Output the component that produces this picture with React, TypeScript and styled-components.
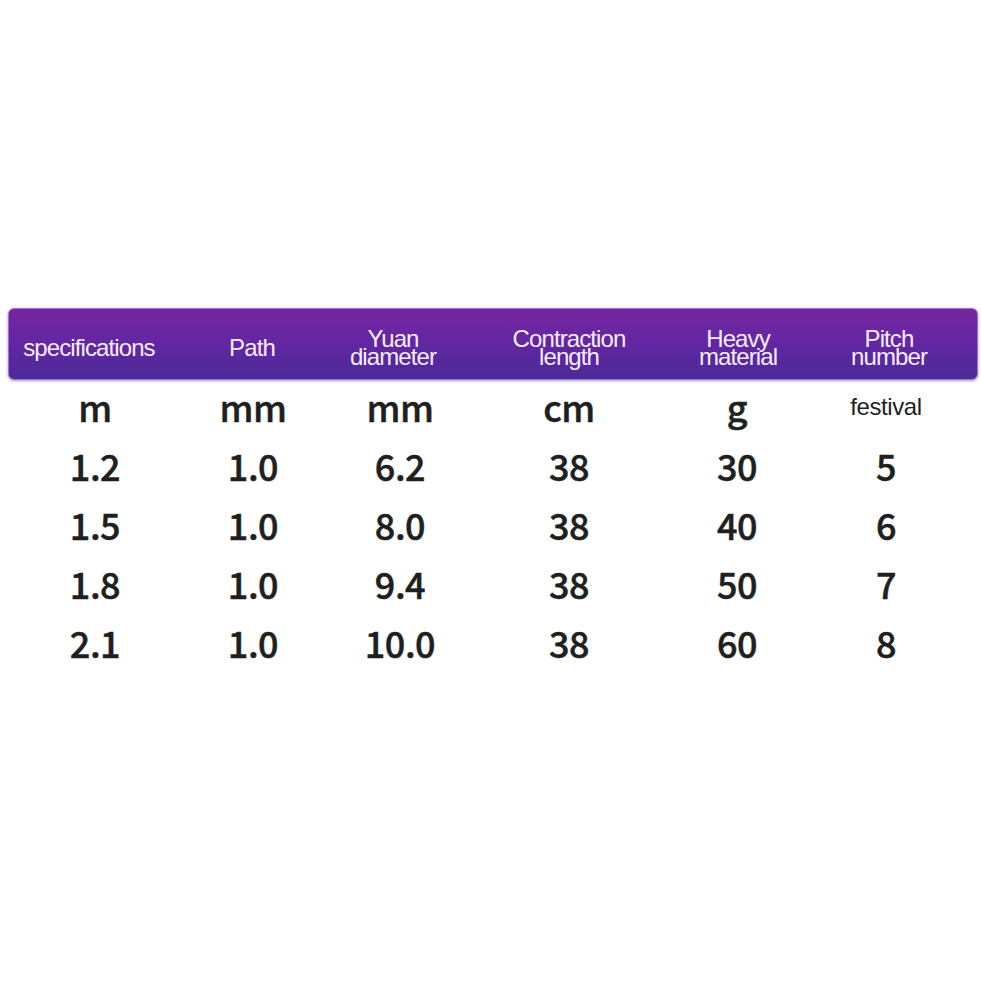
import React from "react";
import styled, { createGlobalStyle } from "styled-components";

const Global = createGlobalStyle`
  html, body { margin: 0; padding: 0; background: #ffffff; }
  body { width: 981px; height: 981px; overflow: hidden; }
`;

const Page = styled.div`
  padding: 308px 3px 0 8px;
`;

const Table = styled.div`
  width: 970px;
`;

const HeaderBar = styled.div`
  display: grid;
  grid-template-columns: 160px 166px 116px 236px 102px 200px;
  align-items: center;
  height: 72px;
  box-sizing: border-box;
  padding-top: 8px;
  border-radius: 6px;
  border: 1px solid #9f72d6;
  background: linear-gradient(180deg, #75259f 0%, #6426a3 45%, #4c2a98 100%);
  box-shadow: 0 1px 3px rgba(60, 20, 110, 0.45);
`;

const HeadCell = styled.div`
  text-align: center;
  color: #f6ecff;
  font-family: "Liberation Sans", Arial, sans-serif;
  font-size: 24px;
  line-height: 18px;
  letter-spacing: -0.9px;
  white-space: nowrap;
`;

const Body = styled.div`
  display: flex;
  flex-direction: column;
  gap: 6px;
`;

const Row = styled.div`
  display: grid;
  grid-template-columns: 174px 142px 152px 186px 150px 148px;
  height: 53px;
  align-items: center;
`;

const Cell = styled.div<{ $plain?: boolean }>`
  text-align: center;
  color: #1f1f1f;
  font-family: ${(p) =>
    p.$plain
      ? `"Liberation Sans", Arial, sans-serif`
      : `"Noto Sans CJK SC", "Noto Sans", sans-serif`};
  font-size: ${(p) => (p.$plain ? "24px" : "36px")};
  font-weight: ${(p) => (p.$plain ? 400 : 500)};
  letter-spacing: ${(p) => (p.$plain ? "-0.4px" : "-0.5px")};
  -webkit-text-stroke: ${(p) => (p.$plain ? "0" : "0.5px #1f1f1f")};
  line-height: 53px;
  white-space: nowrap;
`;

const headers: React.ReactNode[] = [
  "specifications",
  "Path",
  <>
    Yuan
    <br />
    diameter
  </>,
  <>
    Contraction
    <br />
    length
  </>,
  <>
    Heavy
    <br />
    material
  </>,
  <>
    Pitch
    <br />
    number
  </>,
];

const units = ["m", "mm", "mm", "cm", "g", "festival"];

const rows = [
  ["1.2", "1.0", "6.2", "38", "30", "5"],
  ["1.5", "1.0", "8.0", "38", "40", "6"],
  ["1.8", "1.0", "9.4", "38", "50", "7"],
  ["2.1", "1.0", "10.0", "38", "60", "8"],
];

export default function App() {
  return (
    <>
      <Global />
      <Page>
        <Table>
          <HeaderBar>
            {headers.map((h, i) => (
              <HeadCell key={i}>{h}</HeadCell>
            ))}
          </HeaderBar>
          <Body>
            <Row>
              {units.map((u, i) => (
                <Cell key={i} $plain={u === "festival"}>
                  {u}
                </Cell>
              ))}
            </Row>
            {rows.map((r, ri) => (
              <Row key={ri}>
                {r.map((v, ci) => (
                  <Cell key={ci}>{v}</Cell>
                ))}
              </Row>
            ))}
          </Body>
        </Table>
      </Page>
    </>
  );
}
